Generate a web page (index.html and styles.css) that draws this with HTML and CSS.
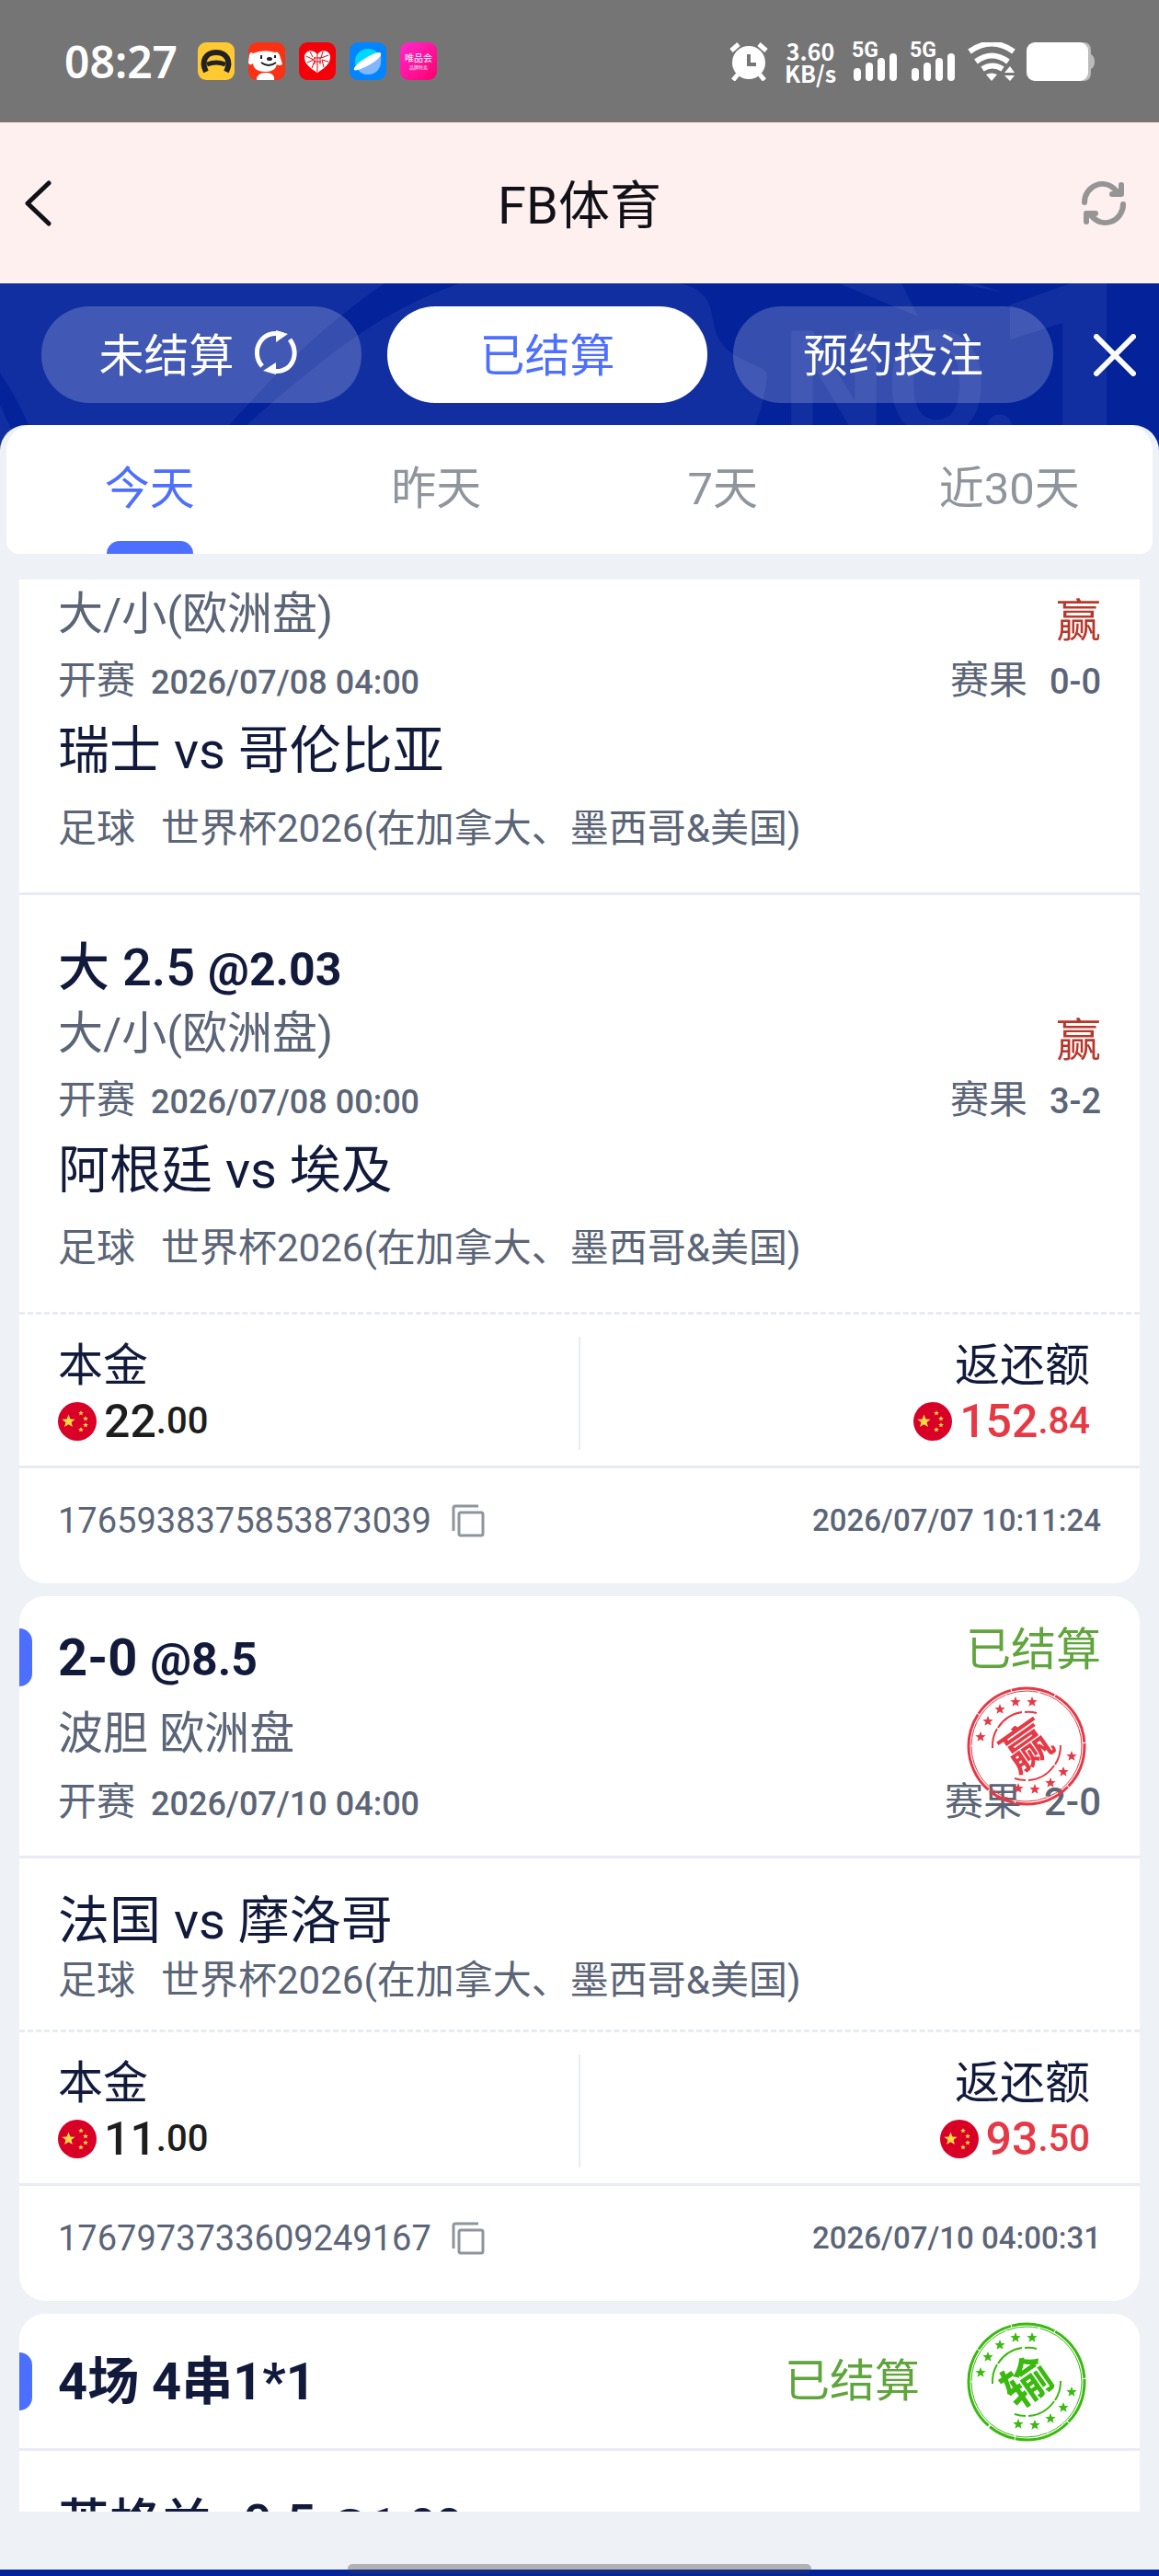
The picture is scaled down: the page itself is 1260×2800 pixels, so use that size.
FILE: index.html
```html
<!DOCTYPE html>
<html lang="zh-CN">
<head>
    <meta charset="UTF-8">
    <meta name="viewport" content="width=device-width">
    <title>FB体育</title>
    <link rel="stylesheet" href="styles.css">
</head>
<body>
    <!-- 公用图标 -->
    <svg class="defs" aria-hidden="true">
        <symbol id="star" viewBox="-10 -10 20 20">
            <path d="M0-10 2.6-3.2 9.5-3.1 4.1 1.3 5.9 8.1 0 4.2-5.9 8.1-4.1 1.3-9.5-3.1-2.6-3.2Z"/>
        </symbol>
        <symbol id="flag" viewBox="0 0 42 42">
            <circle cx="21" cy="21" r="21" fill="#d80027"/>
            <g fill="#ffda44">
                <use href="#star" x="4" y="13" width="15" height="16"/>
                <use href="#star" x="22" y="9" width="6" height="6"/>
                <use href="#star" x="27" y="15" width="6" height="6"/>
                <use href="#star" x="27" y="22" width="6" height="6"/>
                <use href="#star" x="22" y="27" width="6" height="6"/>
            </g>
        </symbol>
        <symbol id="copy" viewBox="0 0 36 36">
            <path d="M2 29V4a2 2 0 0 1 2-2h25" fill="none" stroke="currentColor" stroke-width="3"/>
            <rect x="8" y="9" width="26" height="25" rx="2" fill="none" stroke="currentColor" stroke-width="3"/>
        </symbol>
        <symbol id="signal" viewBox="0 0 48 30">
            <path d="M4 20v6M17 14v12M30 9v17M43 4v22" stroke="#fff" stroke-width="8" stroke-linecap="round"/>
        </symbol>
        <symbol id="ring" viewBox="0 0 130 130">
            <g fill="none" stroke="currentColor">
                <circle cx="65" cy="65" r="63" stroke-width="3" stroke-dasharray="48 1 62 1 30 2 90 1 44 1"/>
                <circle cx="65" cy="65" r="60" stroke-width="1" stroke-dasharray="70 1 35 2 80 1"/>
                <path d="M28 67A37 37 0 0 1 33 46M34 45A37 37 0 0 1 60 28M63 28A37 37 0 0 1 76 29" stroke-width="2"/>
                <path d="M102 64A37 37 0 0 1 96 85M95 86A37 37 0 0 1 67 102M64 102A37 37 0 0 1 52 100" stroke-width="2"/>
            </g>
            <g fill="currentColor">
                <use href="#star" x="9" y="49" width="12" height="12"/>
                <use href="#star" x="17" y="32" width="12" height="12"/>
                <use href="#star" x="30" y="19" width="12" height="12"/>
                <use href="#star" x="47" y="11" width="12" height="12"/>
                <use href="#star" x="65" y="11" width="12" height="12"/>
                <use href="#star" x="108" y="70" width="12" height="12"/>
                <use href="#star" x="99" y="87" width="12" height="12"/>
                <use href="#star" x="85" y="99" width="12" height="12"/>
                <use href="#star" x="68" y="106" width="12" height="12"/>
                <use href="#star" x="50" y="105" width="12" height="12"/>
            </g>
        </symbol>
    </svg>

    <div class="app">
        <div class="status-bar">
            <div class="status-left">
                <span class="clock">08:27</span>
                <svg class="app-icon" viewBox="0 0 40 41">
                    <rect width="40" height="41" rx="9" fill="#ffc931"/>
                    <path d="M9 32C3 20 9 11 20 11s17 9 11 21" fill="none" stroke="#222" stroke-width="6"/>
                    <path d="M10 24q10-4 20 0" fill="none" stroke="#222" stroke-width="5"/>
                </svg>
                <svg class="app-icon" viewBox="0 0 40 41">
                    <rect width="40" height="41" rx="9" fill="#fb3114"/>
                    <path d="M1 14q1-5 4-2 12-5 24-1 3-2 5 3 2 6 3 10-4 2-6 0-2 8-12 8-13 0-14-9-4 3-5-1Z" fill="#fff"/>
                    <path d="M9 41q0-8 10-8t9 8Z" fill="#fff"/>
                    <path d="M14 14v4M29 14v3M14 22q8 6 16 0" fill="none" stroke="#222" stroke-width="2"/>
                    <ellipse cx="23" cy="18" rx="3" ry="2" fill="#222"/>
                </svg>
                <svg class="app-icon" viewBox="0 0 40 41">
                    <rect width="40" height="41" rx="9" fill="#f40009"/>
                    <path d="M20 33C10 27 6 22 6 16c0-8 10-9 14-3 4-6 14-5 14 3 0 6-4 11-14 17Z" fill="#fff"/>
                    <path d="M8 15l8 4-7 3M12 10l3 6M14 28l3-8M20 12v20M16 17h8M16 21h8M23 16v8M17 16v8M26 10l-2 7 8-3M32 21l-7-2 2 8" fill="none" stroke="#f40009" stroke-width="1"/>
                </svg>
                <svg class="app-icon" viewBox="0 0 40 41">
                    <rect width="40" height="41" rx="9" fill="#0584ff"/>
                    <circle cx="20" cy="21" r="14" fill="#00d8ff"/>
                    <path d="M6 30 34 14q2 20-14 21-7 0-11-6Z" fill="#82b6ff"/>
                    <path d="M5 30C3 24 32 7 34 12 37 18 8 33 5 30Z" fill="#fff"/>
                </svg>
                <svg class="app-icon" viewBox="0 0 40 41">
                    <defs>
                        <linearGradient id="vip" x1="0" y1="0" x2="1" y2="1">
                            <stop offset="0" stop-color="#ff29cf"/>
                            <stop offset="1" stop-color="#ff006d"/>
                        </linearGradient>
                    </defs>
                    <rect width="40" height="41" rx="9" fill="url(#vip)"/>
                    <text class="vip-name" x="20" y="21">唯品会</text>
                    <text class="vip-sub" x="20" y="29">品牌特卖</text>
                </svg>
            </div>
            <div class="status-right">
                <svg class="alarm" viewBox="0 0 42 42">
                    <circle cx="21" cy="22" r="18" fill="#fff"/>
                    <path d="M2 9l8-7M40 9l-8-7M9 35l-5 6M33 35l5 6" stroke="#fff" stroke-width="5"/>
                    <path d="M21 13v11h8" fill="none" stroke="#757575" stroke-width="4"/>
                </svg>
                <div class="speed"><span>3.60</span><span>KB/s</span></div>
                <div class="cell"><span>5G</span><svg viewBox="0 0 48 30"><use href="#signal"/></svg></div>
                <div class="cell"><span>5G</span><svg viewBox="0 0 48 30"><use href="#signal"/></svg></div>
                <svg class="wifi" viewBox="0 0 53 42">
                    <path d="M2 10q24-17 48 0M9 21q17-13 35 0M16 29q11-7 22 0" fill="none" stroke="#fff" stroke-width="6"/>
                    <path d="M20 35q6-3 12 0l-6 7ZM40 33l6-7 5 7ZM40 36l6 6 5-6Z" fill="#fff"/>
                </svg>
                <svg class="battery" viewBox="0 0 74 42">
                    <path d="M58 0h4q8 0 8 9v4q4 2 4 8t-4 8v4q0 9-8 9h-4Z" fill="#bbb"/>
                    <rect width="67" height="42" rx="9" fill="#fff"/>
                </svg>
            </div>
        </div>

        <header class="nav">
            <button class="icon-btn back-btn" aria-label="返回">
                <svg width="30" height="50" viewBox="0 0 30 50"><path d="M26 3 3 25l23 22" fill="none" stroke="#101218" stroke-width="5" stroke-linecap="round" stroke-linejoin="round"/></svg>
            </button>
            <h1>FB体育</h1>
            <button class="icon-btn" aria-label="刷新">
                <svg width="50" height="50" viewBox="0 0 50 50" fill="none" stroke="#959595" stroke-width="6" stroke-linecap="round" stroke-linejoin="round">
                    <path d="M4 24C4 6 26-4 39 12M44 5v10H34M46 26c0 18-22 28-35 12M6 45V36h10"/>
                </svg>
            </button>
        </header>

        <div class="hero">
            <svg class="hero-bg" viewBox="0 0 1260 222" preserveAspectRatio="xMidYMin slice" aria-hidden="true">
                <path d="M0 0h738c20 4 32 12 36 34 4 26 10 38 36 50 16 8 24 8 24 18-4 38-20 74-48 120H0Z" fill="#122fa2"/>
                <path d="M418 0h82C410 30 340 90 250 170l-50 40C270 130 330 60 418 0ZM0 98q22 30 38 74v50H0v-30q16 10 12-34L0 132Z" fill="#04239b"/>
                <path d="M912 0h68l18 36ZM1040 0h20l32 10Z" fill="#122fa2"/>
                <text x="850" y="165" class="no">NO.</text>
                <text x="1070" y="230" class="one">1</text>
            </svg>
            <div class="hero-bar">
                <button class="pill">未结算
                    <svg width="50" height="50" viewBox="0 0 50 50">
                        <path d="M10 40C-4 24 10-2 33 6M40 11C53 28 40 52 17 44" fill="none" stroke="#fff" stroke-width="5"/>
                        <path d="M25 1l13 4-13 9ZM25 49l-14-4 14-9Z" fill="#fff"/>
                    </svg>
                </button>
                <button class="pill active">已结算</button>
                <button class="pill">预约投注</button>
                <button class="icon-btn close" aria-label="关闭">
                    <svg width="46" height="46" viewBox="0 0 46 46"><path d="M3 3l40 40M43 3 3 43" stroke="#fff" stroke-width="6" stroke-linecap="round"/></svg>
                </button>
            </div>
        </div>

        <main class="panel">
            <nav class="tabs">
                <a href="#today" class="tab active">今天</a>
                <a href="#yesterday" class="tab">昨天</a>
                <a href="#week" class="tab">7天</a>
                <a href="#month" class="tab">近30天</a>
            </nav>

            <div class="list">
                <article class="card cut">
                    <section class="bet first">
                        <div class="detail">
                            <div class="left">
                                <p class="market">大/小(欧洲盘)</p>
                                <p class="meta">开赛<span class="num">2026/07/08 04:00</span></p>
                            </div>
                            <div class="right">
                                <p class="win">赢</p>
                                <p class="meta">赛果<span class="num score">0-0</span></p>
                            </div>
                        </div>
                        <h2 class="match">瑞士 vs 哥伦比亚</h2>
                        <p class="league"><span>足球</span>世界杯2026(在加拿大、墨西哥&amp;美国)</p>
                    </section>
                    <section class="bet">
                        <h3 class="pick">大 2.5 <span class="odds">@2.03</span></h3>
                        <div class="detail">
                            <div class="left">
                                <p class="market">大/小(欧洲盘)</p>
                                <p class="meta">开赛<span class="num">2026/07/08 00:00</span></p>
                            </div>
                            <div class="right">
                                <p class="win">赢</p>
                                <p class="meta">赛果<span class="num score">3-2</span></p>
                            </div>
                        </div>
                        <h2 class="match">阿根廷 vs 埃及</h2>
                        <p class="league"><span>足球</span>世界杯2026(在加拿大、墨西哥&amp;美国)</p>
                    </section>
                    <section class="funds">
                        <div class="fund">
                            <p>本金</p>
                            <p class="money"><svg><use href="#flag"/></svg><b>22</b><span>.00</span></p>
                        </div>
                        <div class="fund back">
                            <p>返还额</p>
                            <p class="money red"><svg><use href="#flag"/></svg><b>152</b><span>.84</span></p>
                        </div>
                    </section>
                    <footer class="order">
                        <span>1765938375853873039</span>
                        <button class="copy" aria-label="复制"><svg width="36" height="36"><use href="#copy"/></svg></button>
                        <time>2026/07/07 10:11:24</time>
                    </footer>
                </article>

                <article class="card">
                    <section class="single">
                        <div class="head">
                            <h3 class="pick bold">2-0 <span class="odds">@8.5</span></h3>
                            <span class="state">已结算</span>
                        </div>
                        <div class="detail">
                            <div class="left">
                                <p class="market">波胆 欧洲盘</p>
                                <p class="meta">开赛<span class="num">2026/07/10 04:00</span></p>
                            </div>
                            <div class="right">
                                <p class="meta">赛果<span class="num score big">2-0</span></p>
                            </div>
                        </div>
                        <svg class="stamp over red" viewBox="0 0 130 130">
                            <use href="#ring"/>
                            <text x="65" y="84" transform="rotate(-35 65 65)">赢</text>
                        </svg>
                    </section>
                    <section class="teams">
                        <h2 class="match">法国 vs 摩洛哥</h2>
                        <p class="league"><span>足球</span>世界杯2026(在加拿大、墨西哥&amp;美国)</p>
                    </section>
                    <section class="funds">
                        <div class="fund">
                            <p>本金</p>
                            <p class="money"><svg><use href="#flag"/></svg><b>11</b><span>.00</span></p>
                        </div>
                        <div class="fund back">
                            <p>返还额</p>
                            <p class="money red"><svg><use href="#flag"/></svg><b>93</b><span>.50</span></p>
                        </div>
                    </section>
                    <footer class="order">
                        <span>1767973733609249167</span>
                        <button class="copy" aria-label="复制"><svg width="36" height="36"><use href="#copy"/></svg></button>
                        <time>2026/07/10 04:00:31</time>
                    </footer>
                </article>

                <article class="card">
                    <section class="parlay">
                        <div class="head">
                            <h3 class="pick bold">4场 4串1*1</h3>
                            <span class="state">已结算</span>
                            <svg class="stamp green" viewBox="0 0 130 130">
                                <use href="#ring"/>
                                <text x="65" y="84" transform="rotate(-35 65 65)">输</text>
                            </svg>
                        </div>
                    </section>
                    <section class="bet">
                        <h3 class="pick">英格兰 -0.5 <span class="odds">@1.88</span></h3>
                    </section>
                </article>
            </div>
        </main>

        <div class="home-bar"></div>
    </div>
</body>
</html>
```

FILE: styles.css
```css
* {
    box-sizing: border-box;
}
body {
    margin: 0;
    background: #04239b;
    font-family: Roboto, "Noto Sans CJK SC", sans-serif;
    color: #121a3c;
}
h1, h2, h3, p {
    margin: 0;
    font-weight: 400;
}
button {
    padding: 0;
    border: none;
    background: none;
    font-family: inherit;
    cursor: pointer;
}
svg {
    display: block;
    flex-shrink: 0;
}
.defs {
    position: absolute;
    width: 0;
    height: 0;
}
.app {
    position: relative;
    display: flex;
    flex-direction: column;
    height: 100vh;
}

/* 状态栏 */
.status-bar {
    display: flex;
    justify-content: space-between;
    align-items: center;
    height: 133px;
    padding: 0 70px;
    background: #757575;
    color: #fff;
}
.status-left,
.status-right {
    display: flex;
    align-items: center;
}
.status-left {
    gap: 15px;
}
.clock {
    margin-right: 7px;
    font-family: "Noto Sans", sans-serif;
    font-size: 48px;
    font-weight: 600;
    line-height: 56px;
}
.app-icon {
    width: 40px;
    height: 41px;
}
.vip-name,
.vip-sub {
    fill: #fff;
    text-anchor: middle;
}
.vip-name {
    font-size: 10px;
}
.vip-sub {
    font-size: 5px;
}
.alarm {
    width: 42px;
    height: 42px;
    margin-right: 20px;
}
.speed {
    display: flex;
    flex-direction: column;
    align-items: center;
    width: 52px;
    margin-right: 19px;
    font-family: "Noto Sans CJK SC", sans-serif;
    font-size: 25px;
    font-weight: 700;
    line-height: 24px;
}
.cell {
    position: relative;
    width: 50px;
    height: 42px;
    margin-right: 13px;
    font-size: 23px;
    font-weight: 700;
    line-height: 18px;
}
.cell span {
    position: absolute;
    top: 0;
    left: 0;
}
.cell svg {
    width: 48px;
    height: 30px;
    margin: 12px 0 0 2px;
}
.wifi {
    width: 53px;
    height: 42px;
    margin-right: 11px;
}
.battery {
    width: 74px;
    height: 42px;
}

/* 标题栏 */
.nav {
    display: flex;
    justify-content: space-between;
    align-items: center;
    height: 175px;
    padding: 0 35px 0 27px;
    background: #fff0f0;
}
.nav h1 {
    padding-bottom: 4px;
    color: #101218;
    font-size: 56px;
}
.back-btn {
    width: 58px;
}

/* 顶部切换 */
.hero {
    position: relative;
    height: 154px;
}
.hero-bg {
    position: absolute;
    top: 0;
    left: 0;
    width: 100%;
    height: 222px;
}
.no,
.one {
    fill: #122fa2;
    font-weight: 700;
}
.no {
    font-size: 160px;
}
.one {
    font-size: 340px;
}
.hero-bar {
    position: relative;
    display: flex;
    align-items: center;
    gap: 28px;
    padding: 25px 25px 0 45px;
}
.pill {
    display: flex;
    flex: 1;
    justify-content: center;
    align-items: center;
    gap: 20px;
    height: 105px;
    padding-bottom: 6px;
    border-radius: 52px;
    background: rgba(255, 255, 255, .2);
    color: #fff;
    font-size: 49px;
}
.pill svg {
    margin-right: 6px;
}
.pill.active {
    background: #fff;
    color: #4d6fff;
}
.close {
    margin-left: 16px;
}

/* 内容区 */
.panel {
    position: relative;
    display: flex;
    flex: 1;
    flex-direction: column;
    min-height: 0;
    margin-bottom: 7px;
    padding-bottom: 63px;
    border-radius: 28px 28px 0 0;
    background: #eef2f6;
    overflow: hidden;
}
.tabs {
    display: flex;
    flex-shrink: 0;
    margin: 0 7px 28px;
    border-radius: 28px 28px 14px 14px;
    background: #fff;
}
.tab {
    position: relative;
    flex: 1;
    height: 140px;
    color: #8f959c;
    font-size: 49px;
    line-height: 140px;
    text-align: center;
    text-decoration: none;
}
.tab.active {
    color: #4d6fff;
}
.tab.active::after {
    content: "";
    position: absolute;
    bottom: 0;
    left: 50%;
    width: 94px;
    height: 14px;
    margin-left: -47px;
    border-radius: 14px 14px 0 0;
    background: #4d6fff;
}
.list {
    flex: 1;
    min-height: 0;
    padding: 0 21px;
    overflow: hidden;
}

/* 注单卡片 */
.card {
    margin-bottom: 14px;
    border-radius: 28px;
    background: #fff;
}
.card.cut {
    border-radius: 0 0 28px 28px;
}
.bet {
    padding: 47px 42px 45px;
}
.bet.first {
    padding-top: 10px;
    border-bottom: 3px solid #e8ebf4;
}
.pick {
    font-size: 56px;
    font-weight: 500;
    line-height: 64px;
}
.pick.bold {
    font-weight: 700;
}
.odds {
    font-size: 50px;
    font-weight: 700;
    line-height: 1;
}
.detail {
    display: flex;
    justify-content: space-between;
    align-items: flex-end;
    color: #5b6577;
}
.bet .pick + .detail {
    margin-top: 12px;
}
.left {
    display: flex;
    flex-direction: column;
    gap: 20px;
}
.right {
    display: flex;
    flex-direction: column;
    align-items: flex-end;
    gap: 12px;
}
.market,
.win {
    font-size: 49px;
    line-height: 56px;
}
.win {
    color: #b8372b;
}
.meta,
.league {
    font-size: 42px;
    line-height: 48px;
}
.num {
    margin-left: 17px;
    font-size: 36px;
    font-weight: 500;
    line-height: 1;
}
.score {
    margin-left: 24px;
    font-size: 38px;
}
.score.big {
    font-size: 42px;
}
.match {
    margin-top: 20px;
    font-size: 56px;
    line-height: 64px;
}
.league {
    margin-top: 29px;
    color: #5b6577;
}
.league span {
    margin-right: 28px;
}

.single,
.parlay {
    position: relative;
    border-bottom: 3px solid #e8ebf4;
}
.single {
    padding: 35px 42px 34px;
}
.single .detail {
    margin-top: 23px;
}
.single .left {
    gap: 22px;
}
.parlay {
    padding: 42px 58px 40px 42px;
}
.single::before,
.parlay::before {
    content: "";
    position: absolute;
    top: 35px;
    left: 0;
    width: 14px;
    height: 63px;
    border-radius: 0 14px 14px 0;
    background: #4d6fff;
}
.parlay::before {
    top: 42px;
}
.head {
    display: flex;
    align-items: flex-start;
}
.head .pick {
    flex: 1;
}
.state {
    color: #5fa53c;
    font-size: 49px;
    line-height: 48px;
}
.parlay .state {
    line-height: 64px;
}
.stamp {
    width: 130px;
    height: 130px;
    font-size: 52px;
    font-weight: 700;
}
.stamp text {
    fill: currentColor;
    text-anchor: middle;
}
.stamp.over {
    position: absolute;
    top: 98px;
    right: 58px;
}
.parlay .stamp {
    margin: -33px 0 -33px 51px;
}
.red {
    color: #e63946;
}
.green {
    color: #3ab90f;
}
.teams {
    padding: 36px 42px 29px;
}
.teams .match {
    margin-top: 0;
}
.teams .league {
    margin-top: 9px;
}

/* 金额 */
.funds {
    display: flex;
    padding: 24px 0 17px;
    border-top: 3px dashed #e8ebf4;
    border-bottom: 3px solid #e8ebf4;
}
.fund {
    flex: 1;
    padding: 2px 54px 1px 42px;
    font-size: 49px;
    line-height: 60px;
}
.back {
    display: flex;
    flex-direction: column;
    align-items: flex-end;
    border-left: 2px solid #e8ebf4;
}
.money {
    display: flex;
    align-items: center;
}
.money:not(.red) {
    color: #1d1d1d;
}
.money svg {
    width: 42px;
    height: 42px;
    margin-right: 8px;
}
.money b {
    font-size: 50px;
    font-weight: 500;
}
.money span {
    font-size: 40px;
    font-weight: 500;
}

.order {
    display: flex;
    align-items: center;
    padding: 33px 42px 44px;
    color: #5b6577;
    font-size: 38px;
    line-height: 48px;
}
.copy {
    margin-left: 22px;
    color: #8f959c;
}
.order time {
    margin-left: auto;
    font-size: 33px;
    font-weight: 500;
}

.home-bar {
    position: absolute;
    bottom: 3px;
    left: 30%;
    width: 40%;
    height: 10px;
    border-radius: 5px;
    background: rgba(60, 60, 60, .35);
}
```
